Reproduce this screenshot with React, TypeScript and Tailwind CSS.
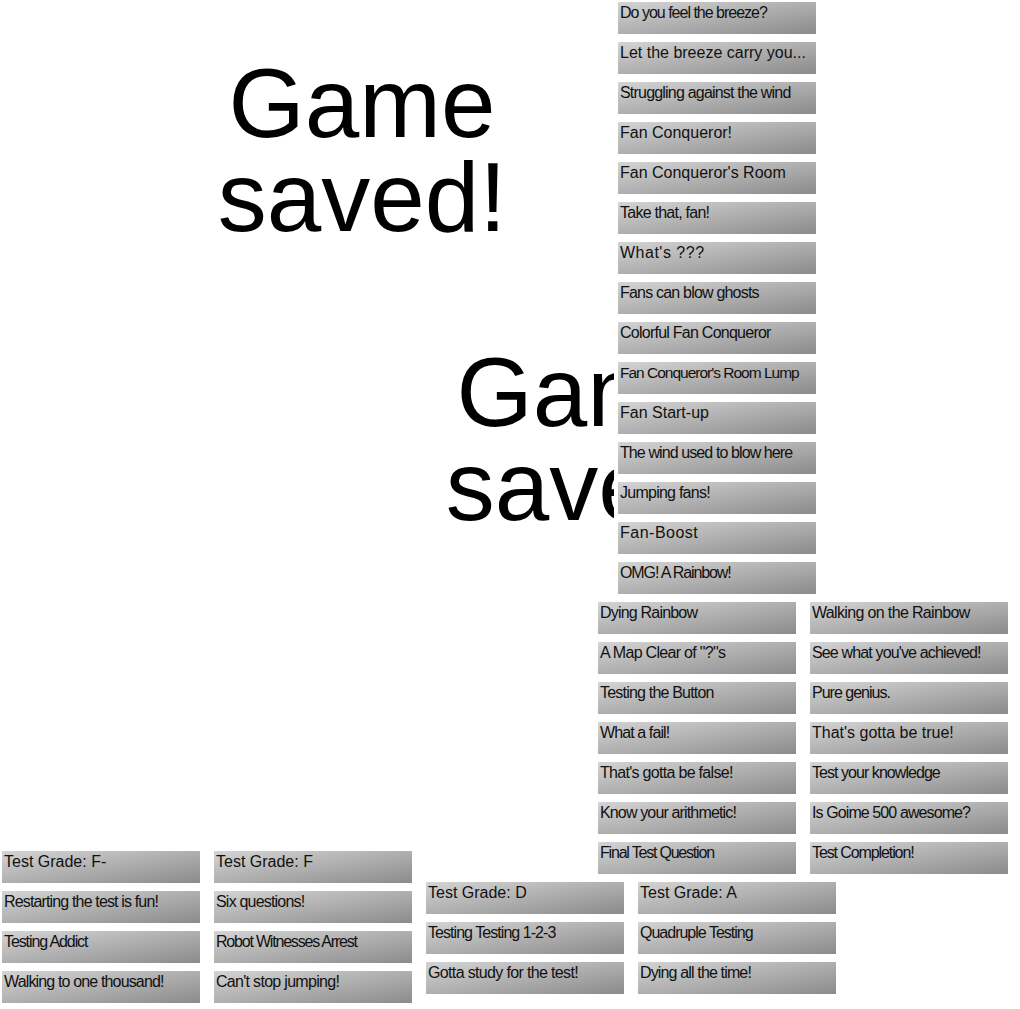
import React from "react";

type Achievement = {
	label: string;
	track: string;
	size?: string;
};

const fanColumn: Achievement[] = [
	{ label: "Do you feel the breeze?", track: "tracking-[-1px]" },
	{ label: "Let the breeze carry you...", track: "tracking-normal" },
	{ label: "Struggling against the wind", track: "tracking-[-0.8px]" },
	{ label: "Fan Conqueror!", track: "tracking-normal" },
	{ label: "Fan Conqueror's Room", track: "tracking-normal" },
	{ label: "Take that, fan!", track: "tracking-[-0.75px]" },
	{ label: "What's ???", track: "tracking-[0.5px]" },
	{ label: "Fans can blow ghosts", track: "tracking-[-0.8px]" },
	{ label: "Colorful Fan Conqueror", track: "tracking-[-0.75px]" },
	{
		label: "Fan Conqueror's Room Lump",
		track: "tracking-[-1px]",
		size: "text-[15.5px]",
	},
	{ label: "Fan Start-up", track: "tracking-normal" },
	{ label: "The wind used to blow here", track: "tracking-[-0.9px]" },
	{ label: "Jumping fans!", track: "tracking-[-0.75px]" },
	{ label: "Fan-Boost", track: "tracking-[0.5px]" },
	{ label: "OMG! A Rainbow!", track: "tracking-[-1.1px]" },
];

const rainbowLeft: Achievement[] = [
	{ label: "Dying Rainbow", track: "tracking-[-0.8px]" },
	{ label: 'A Map Clear of "?"s', track: "tracking-[-0.7px]" },
	{ label: "Testing the Button", track: "tracking-[-0.8px]" },
	{ label: "What a fail!", track: "tracking-[-0.9px]" },
	{ label: "That's gotta be false!", track: "tracking-[-0.7px]" },
	{ label: "Know your arithmetic!", track: "tracking-[-0.85px]" },
	{ label: "Final Test Question", track: "tracking-[-1.2px]" },
];

const rainbowRight: Achievement[] = [
	{ label: "Walking on the Rainbow", track: "tracking-[-0.65px]" },
	{ label: "See what you've achieved!", track: "tracking-[-0.85px]" },
	{ label: "Pure genius.", track: "tracking-[-1px]" },
	{ label: "That's gotta be true!", track: "tracking-normal" },
	{ label: "Test your knowledge", track: "tracking-[-0.95px]" },
	{ label: "Is Goime 500 awesome?", track: "tracking-[-0.9px]" },
	{ label: "Test Completion!", track: "tracking-[-1.1px]" },
];

const gradeF1: Achievement[] = [
	{ label: "Test Grade: F-", track: "tracking-normal" },
	{ label: "Restarting the test is fun!", track: "tracking-[-0.85px]" },
	{ label: "Testing Addict", track: "tracking-[-1.1px]" },
	{ label: "Walking to one thousand!", track: "tracking-[-0.85px]" },
];

const gradeF2: Achievement[] = [
	{ label: "Test Grade: F", track: "tracking-normal" },
	{ label: "Six questions!", track: "tracking-[-0.8px]" },
	{ label: "Robot Witnesses Arrest", track: "tracking-[-1.2px]" },
	{ label: "Can't stop jumping!", track: "tracking-[-0.7px]" },
];

const gradeD: Achievement[] = [
	{ label: "Test Grade: D", track: "tracking-normal" },
	{ label: "Testing Testing 1-2-3", track: "tracking-[-0.95px]" },
	{ label: "Gotta study for the test!", track: "tracking-[-0.65px]" },
];

const gradeA: Achievement[] = [
	{ label: "Test Grade: A", track: "tracking-normal" },
	{ label: "Quadruple Testing", track: "tracking-[-1px]" },
	{ label: "Dying all the time!", track: "tracking-[-0.85px]" },
];

const AchievementButton = ({ label, track, size = "text-[16px]" }: Achievement) => (
	<div
		className={`h-8 w-[198px] shrink-0 overflow-hidden whitespace-nowrap bg-[linear-gradient(to_bottom_right,#d4d4d4,#8b8b8b)] pl-[2px] pt-[2px] leading-[18px] text-[#111] ${size} ${track}`}
	>
		{label}
	</div>
);

const Column = ({ items }: { items: Achievement[] }) => (
	<div className="flex flex-col gap-2">
		{items.map((item) => (
			<AchievementButton key={item.label} {...item} />
		))}
	</div>
);

const SavedMessage = ({ className }: { className: string }) => (
	<div
		className={`absolute w-[400px] text-center text-[98px] leading-[94px] text-black ${className}`}
	>
		Game
		<br />
		saved!
	</div>
);

export default function App() {
	return (
		<div className="relative h-[1009px] w-[1020px] overflow-hidden bg-white font-['Liberation_Sans',Arial,sans-serif]">
			<SavedMessage className="left-[162px] top-[56px]" />
			<SavedMessage className="left-[390px] top-[345px]" />

			{/* fan achievements */}
			<div className="absolute left-[614px] top-0 bg-white pl-[4px] pt-[2px] pb-2">
				<Column items={fanColumn} />
			</div>

			{/* rainbow + test */}
			<div className="absolute left-[598px] top-[602px] flex gap-[14px]">
				<Column items={rainbowLeft} />
				<Column items={rainbowRight} />
			</div>

			{/* grades F */}
			<div className="absolute left-[2px] top-[851px] flex gap-[14px]">
				<Column items={gradeF1} />
				<Column items={gradeF2} />
			</div>

			{/* grades D / A */}
			<div className="absolute left-[426px] top-[882px] flex gap-[14px]">
				<Column items={gradeD} />
				<Column items={gradeA} />
			</div>
		</div>
	);
}
